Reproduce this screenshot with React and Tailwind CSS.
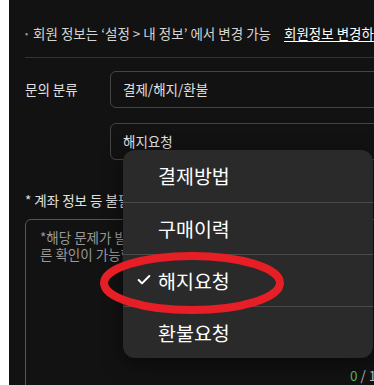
import { Check } from "lucide-react";

const FONT = { fontFamily: '"Noto Sans CJK KR", "Noto Sans", sans-serif' };
const OPTIONS = ["결제방법", "구매이력", "해지요청", "환불요청"];

export default function App() {
  return (
    <div className="flex h-[385px] w-[374px] bg-white" style={FONT}>
      <div className="relative ml-[9px] flex-1 overflow-hidden bg-[#121212] pl-4">
        {/* notice */}
        <div className="flex h-[57px] items-center whitespace-nowrap pt-[10px] text-[13.5px] text-[#d4d4d4]">
          <span className="mr-[5px] text-[9px] text-[#999]">•</span>
          <span>회원 정보는 ‘설정 &gt; 내 정보’ 에서 변경 가능</span>
          <span className="ml-[13px] text-white underline underline-offset-2">회원정보 변경하기</span>
        </div>
        <div className="h-px w-[400px] bg-[#333]" />

        {/* category */}
        <div className="mt-[13px] flex items-center">
          <span className="w-[85px] shrink-0 text-[13.5px] text-[#e0e0e0]">문의 분류</span>
          <div className="flex h-[37px] w-[300px] shrink-0 items-center rounded-[6px] border border-[#444] pl-3 text-[13.5px] text-[#e0e0e0]">
            결제/해지/환불
          </div>
        </div>
        <div className="ml-[85px] mt-[15px] flex h-[37px] w-[300px] items-center rounded-[6px] border border-[#444] pl-3 text-[13.5px] text-[#e0e0e0]">
          해지요청
        </div>

        {/* notice 2 */}
        <div className="mt-[30px] whitespace-nowrap text-[13.5px] text-[#e0e0e0]">
          * 계좌 정보 등 불필요한 개인정보는 기재하지 말아주세요.
        </div>

        {/* textarea */}
        <div className="mt-[9px] flex h-[200px] w-[400px] flex-col rounded-[6px] border border-[#555] px-[14px] pt-[9px] text-[13.5px] leading-[17px] text-[#999]">
          <div className="whitespace-nowrap">*해당 문제가 발생한 계정 정보를 기재해주셔야 빠</div>
          <div className="whitespace-nowrap">른 확인이 가능합니다.</div>
          <div className="mt-[104px] whitespace-nowrap pl-[310px] text-[13.5px] text-[#bbb]">
            <span className="text-[#5cb85c]">0</span> / 1,000
          </div>
        </div>

        {/* dropdown */}
        <div className="absolute left-[114px] top-[150px] w-[250px] overflow-hidden rounded-[12px] bg-[#2a2a2a] shadow-[0_6px_20px_rgba(0,0,0,0.5)]">
          {OPTIONS.map((o, i) => (
            <div
              key={o}
              className={`relative flex h-[52px] items-center pl-[35px] text-[19.5px] text-white ${i > 0 ? "border-t border-[#4a4a4a]" : ""}`}
            >
              {o === "해지요청" && (
                <Check className="absolute left-[13px] top-[17px] h-[16px] w-[16px]" strokeWidth={3} />
              )}
              {o}
            </div>
          ))}
        </div>

        {/* red annotation */}
        <svg className="pointer-events-none absolute left-[90px] top-[252px]" width="186" height="62" viewBox="0 0 186 62">
          <ellipse cx="93" cy="31" rx="88" ry="27" fill="none" stroke="#e61e25" strokeWidth="8" />
        </svg>
      </div>
    </div>
  );
}
